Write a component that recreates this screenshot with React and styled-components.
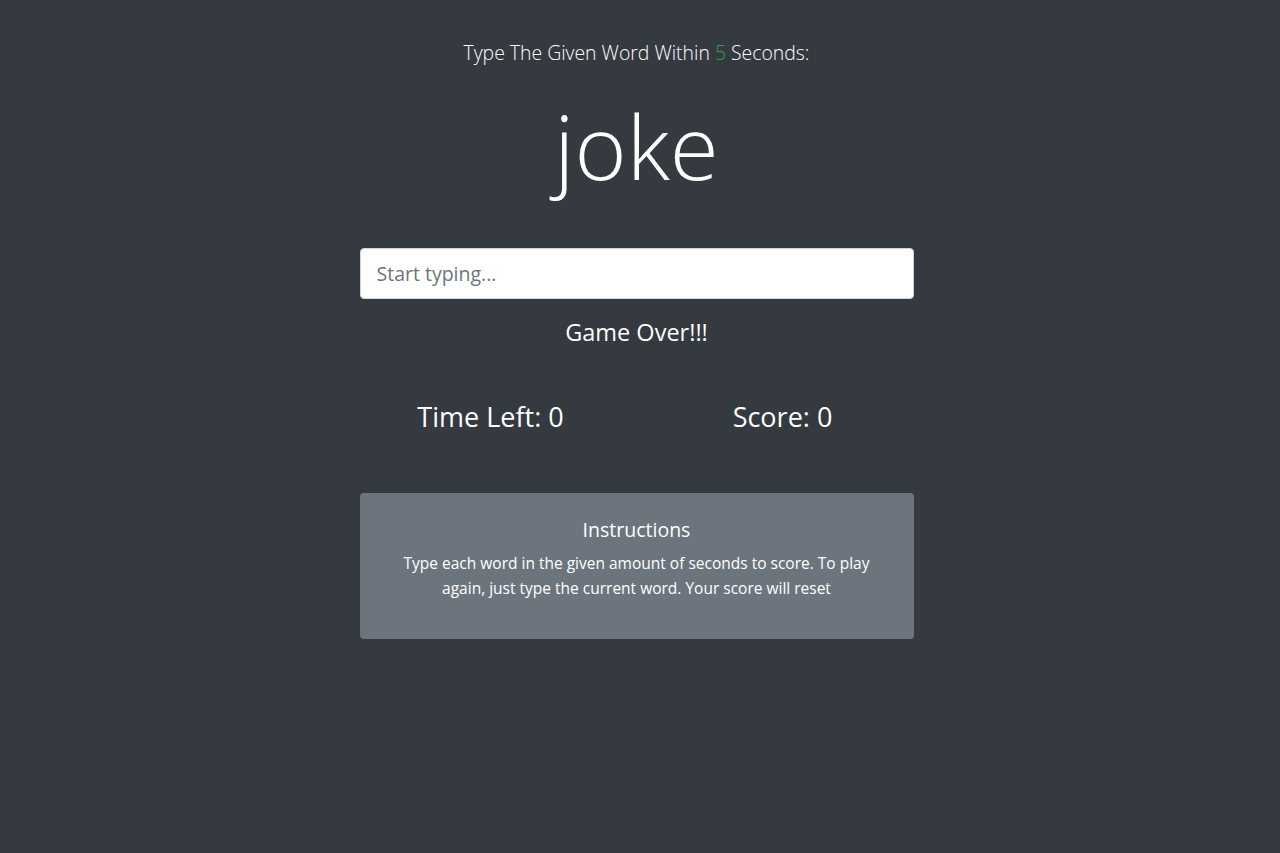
import styled, { createGlobalStyle } from "styled-components";

const Global = createGlobalStyle`
  html, body {
    margin: 0;
    background: #343a40;
  }
  body {
    font-family: "Open Sans", "Noto Sans", sans-serif;
    color: #fff;
  }
`;

const Page = styled.div`
  min-height: 853px;
  background: #343a40;
  display: flex;
  flex-direction: column;
  align-items: center;
  padding: 38px 7px 0 0;
  box-sizing: border-box;
`;

const Column = styled.div`
  width: 554px;
  display: flex;
  flex-direction: column;
  align-items: stretch;
`;

const Lead = styled.p`
  margin: 0;
  text-align: center;
  font-size: 19.4px;
  font-weight: 300;
  line-height: 30px;
`;

const Seconds = styled.span`
  color: #28a745;
`;

const Word = styled.h2`
  margin: 26px 0 0;
  text-align: center;
  font-size: 89px;
  font-weight: 300;
  line-height: 104px;
`;

const Input = styled.input`
  margin-top: 50px;
  height: 51px;
  box-sizing: border-box;
  border: 1px solid #ced4da;
  border-radius: 4px;
  padding: 0 16px;
  font-family: inherit;
  font-size: 19.5px;
  color: #495057;
  background: #fff;
  outline: none;
  &::placeholder {
    color: #6c757d;
  }
`;

const Status = styled.h4`
  margin: 17px 0 0;
  text-align: center;
  font-size: 23.5px;
  font-weight: 400;
  line-height: 32px;
`;

const Stats = styled.div`
  margin: 51px -15px 0;
  display: grid;
  grid-template-columns: 1fr 1fr;
`;

const Stat = styled.h3`
  margin: 0;
  text-align: center;
  font-size: 27px;
  font-weight: 400;
  line-height: 36px;
`;

const Card = styled.div`
  margin-top: 58px;
  background: #6c757d;
  border-radius: 4px;
  padding: 23px 40px 38px;
  text-align: center;
`;

const CardTitle = styled.h5`
  margin: 0 0 7px;
  font-size: 19.5px;
  font-weight: 400;
  line-height: 28px;
`;

const CardText = styled.p`
  margin: 0;
  font-size: 15.5px;
  line-height: 25px;
`;

export default function App() {
  return (
    <Page>
      <Global />
      <Column>
        <Lead>
          Type The Given Word Within <Seconds>5</Seconds> Seconds:
        </Lead>
        <Word>joke</Word>
        <Input placeholder="Start typing..." />
        <Status>Game Over!!!</Status>
        <Stats>
          <Stat>Time Left: 0</Stat>
          <Stat>Score: 0</Stat>
        </Stats>
        <Card>
          <CardTitle>Instructions</CardTitle>
          <CardText>
            Type each word in the given amount of seconds to score. To play
            again, just type the current word. Your score will reset
          </CardText>
        </Card>
      </Column>
    </Page>
  );
}
